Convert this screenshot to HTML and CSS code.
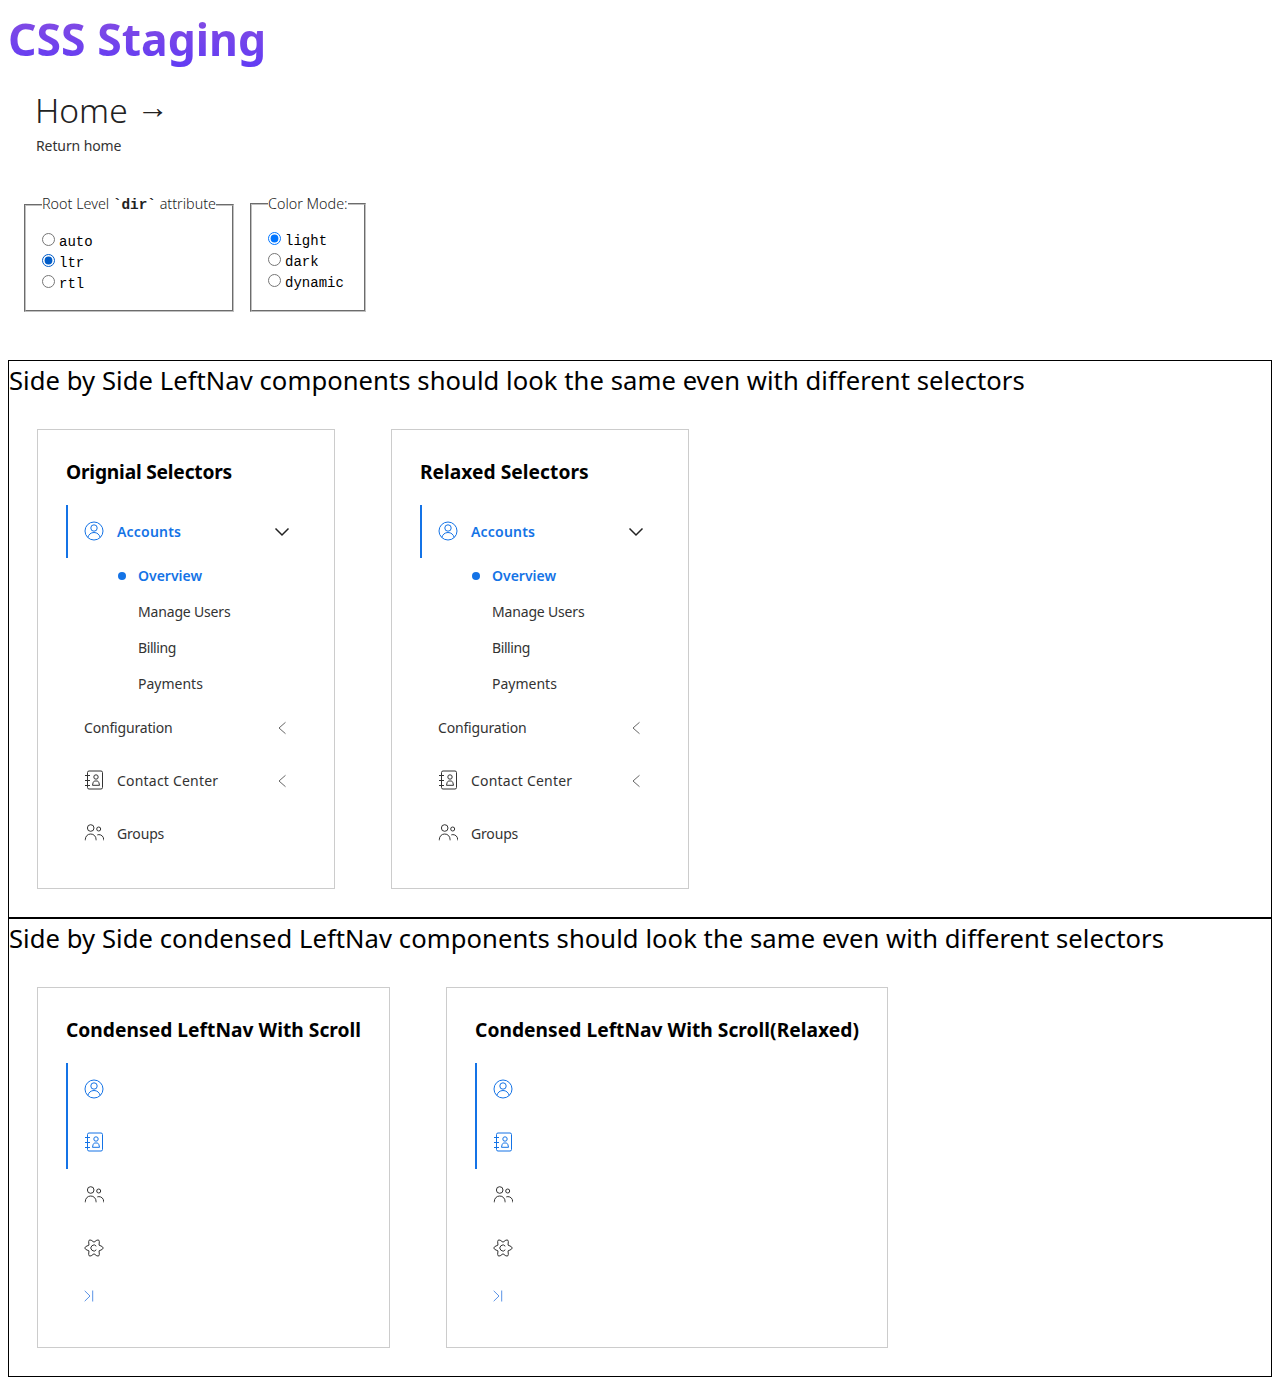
FILE: index.html
```html
<!DOCTYPE html>
<html lang="en">
<head>
  <meta charset="UTF-8">
  <meta name="viewport" content="width=device-width, initial-scale=1.0">
  <title>CSS Staging</title>
  <link rel="stylesheet" href="styles.css">
</head>
<body>
  <!-- Shared nav icons -->
  <svg class="icon-defs" aria-hidden="true">
    <symbol id="i-user" viewBox="0 0 20 20">
      <circle cx="10" cy="10" r="9" />
      <circle cx="10" cy="7" r="3.2" />
      <path d="M3.800 16.500c.8-3 3-5 6.200-5s5.400 2 6.200 5" />
    </symbol>
    <symbol id="i-book" viewBox="0 0 20 20">
      <rect x="3.500" y="1" width="15" height="18" rx="1.500" />
      <path d="M1 5.500h5M1 10.500h5M1 15.500h5" />
      <circle cx="12" cy="7" r="2.200" />
      <path d="M8.500 15.300l.6-2.600c.2-1 1-1.700 2-1.700h1.800c1 0 1.800.7 2 1.700l.6 2.600z" />
    </symbol>
    <symbol id="i-groups" viewBox="0 0 20 20">
      <circle cx="6.700" cy="5" r="3.300" />
      <circle cx="14.700" cy="6" r="2" />
      <path d="M1.300 17.300v-.6c0-3.500 2.400-5.700 5.400-5.700s5.400 2.200 5.400 5.700v.6" />
      <path d="M13.300 11.900c.5-.2 1-.3 1.600-.3 2.600 0 4.800 2 4.800 5v.7" />
    </symbol>
    <symbol id="i-gear" viewBox="0 0 20 20">
      <path d="M15.020 7.100Q23.500 10 15.020 12.900 16.750 21.700 10 15.800 3.250 21.700 4.980 12.900-3.500 10 4.980 7.100 3.250-1.700 10 4.200 16.750-1.700 15.020 7.100z" />
      <path d="M12.300 8.200a3 3 0 1 0 0 3.600" />
    </symbol>
  </svg>

  <h1 class="site-title">CSS Staging</h1>

  <div class="home-link">
    <h2>Home <span>&rarr;</span></h2>
    <p>Return home</p>
  </div>

  <div class="controls">
    <fieldset class="dir-group">
      <legend>Root Level <code>`dir`</code> attribute</legend>
      <label><input type="radio" name="dir">auto</label>
      <label><input class="radio-pressed" type="radio" name="dir" checked>ltr</label>
      <label><input type="radio" name="dir">rtl</label>
    </fieldset>
    <fieldset class="mode-group">
      <legend>Color Mode:</legend>
      <label><input type="radio" name="mode" checked>light</label>
      <label><input type="radio" name="mode">dark</label>
      <label><input type="radio" name="mode">dynamic</label>
    </fieldset>
  </div>

  <section class="compare">
    <h3>Side by Side LeftNav components should look the same even with different selectors</h3>
    <div class="cards">
      <div class="card card-wide">
        <h4 class="tight-title">Orignial Selectors</h4>
        <div class="nav-group">
          <div class="nav-item active">
            <svg class="icon"><use href="#i-user" /></svg>
            <span class="nav-label wide">Accounts</span>
            <svg class="chev-down" viewBox="0 0 16 10"><path d="M1.500 1.500 8 8l6.500-6.500" /></svg>
          </div>
          <ul class="sub-list">
            <li class="current">Overview</li>
            <li class="tight">Manage Users</li>
            <li class="tighter">Billing</li>
            <li>Payments</li>
          </ul>
        </div>
        <div class="nav-item">
          <span class="nav-label tight">Configuration</span>
          <svg class="chev-left" viewBox="0 0 10 16"><path d="M8.500 2.300 2 8l6.500 5.700" /></svg>
        </div>
        <div class="nav-item">
          <svg class="icon"><use href="#i-book" /></svg>
          <span class="nav-label wide">Contact Center</span>
          <svg class="chev-left" viewBox="0 0 10 16"><path d="M8.500 2.300 2 8l6.500 5.700" /></svg>
        </div>
        <div class="nav-item">
          <svg class="icon"><use href="#i-groups" /></svg>
          <span class="nav-label tight">Groups</span>
        </div>
      </div>

      <div class="card card-wide">
        <h4>Relaxed Selectors</h4>
        <div class="nav-group">
          <div class="nav-item active">
            <svg class="icon"><use href="#i-user" /></svg>
            <span class="nav-label wide">Accounts</span>
            <svg class="chev-down" viewBox="0 0 16 10"><path d="M1.500 1.500 8 8l6.500-6.500" /></svg>
          </div>
          <ul class="sub-list">
            <li class="current">Overview</li>
            <li class="tight">Manage Users</li>
            <li class="tighter">Billing</li>
            <li>Payments</li>
          </ul>
        </div>
        <div class="nav-item">
          <span class="nav-label tight">Configuration</span>
          <svg class="chev-left" viewBox="0 0 10 16"><path d="M8.500 2.300 2 8l6.500 5.700" /></svg>
        </div>
        <div class="nav-item">
          <svg class="icon"><use href="#i-book" /></svg>
          <span class="nav-label wide">Contact Center</span>
          <svg class="chev-left" viewBox="0 0 10 16"><path d="M8.500 2.300 2 8l6.500 5.700" /></svg>
        </div>
        <div class="nav-item">
          <svg class="icon"><use href="#i-groups" /></svg>
          <span class="nav-label tight">Groups</span>
        </div>
      </div>
    </div>
  </section>

  <section class="compare">
    <h3>Side by Side condensed LeftNav components should look the same even with different selectors</h3>
    <div class="cards">
      <div class="card">
        <h4>Condensed LeftNav With Scroll</h4>
        <div class="nav-group active">
          <div class="nav-item"><svg class="icon"><use href="#i-user" /></svg></div>
          <div class="nav-item"><svg class="icon"><use href="#i-book" /></svg></div>
        </div>
        <div class="nav-item"><svg class="icon"><use href="#i-groups" /></svg></div>
        <div class="nav-item"><svg class="icon"><use href="#i-gear" /></svg></div>
        <div class="nav-expand">
          <svg viewBox="0 0 10 12"><path d="M.7.8 6 6 .7 11.200M8.700.5v11" /></svg>
        </div>
      </div>

      <div class="card">
        <h4>Condensed LeftNav With Scroll(Relaxed)</h4>
        <div class="nav-group active">
          <div class="nav-item"><svg class="icon"><use href="#i-user" /></svg></div>
          <div class="nav-item"><svg class="icon"><use href="#i-book" /></svg></div>
        </div>
        <div class="nav-item"><svg class="icon"><use href="#i-groups" /></svg></div>
        <div class="nav-item"><svg class="icon"><use href="#i-gear" /></svg></div>
        <div class="nav-expand">
          <svg viewBox="0 0 10 12"><path d="M.7.8 6 6 .7 11.200M8.700.5v11" /></svg>
        </div>
      </div>
    </div>
  </section>
</body>
</html>
```

FILE: styles.css
```css
body {
  margin: 8px;
  font-family: "Noto Sans", sans-serif;
  color: #000;
  background-color: #fff;
}
.icon-defs {
  display: none;
}

/* Page header */
.site-title {
  display: table;
  margin: 0;
  font-size: 44.5px;
  line-height: 62px;
  font-weight: 700;
  background: linear-gradient(180deg, #8a4fe0, #5f3af5);
  -webkit-background-clip: text;
  background-clip: text;
  color: transparent;
}
.home-link {
  padding: 0 28px;
  margin-top: 18px;
  color: #333;
}
.home-link h2 {
  margin: 0 0 0 -1px;
  font-size: 33.6px;
  line-height: 44px;
  font-weight: 300;
  color: #222;
}
.home-link h2 span {
  font-family: "Liberation Sans", sans-serif;
  font-size: 32px;
  line-height: 0;
  vertical-align: 5px;
}
.home-link p {
  margin: 2px 0 0;
  font-size: 14px;
  line-height: 24px;
  letter-spacing: -.1px;
}

/* Radio groups */
.controls {
  display: flex;
  align-items: flex-end;
  gap: 16px;
  margin: 36px 0 0 16px;
}
fieldset {
  margin: 0;
  padding: 0 16px 15px;
  border: 2px groove #c0c0c0;
}
.mode-group {
  width: 80px;
  padding-bottom: 16px;
}
legend {
  height: 19px;
  padding: 0;
  margin-bottom: 18px;
  font-size: 14.35px;
  font-weight: 300;
  line-height: 19px;
  white-space: nowrap;
  color: #222;
}
.dir-group legend {
  height: 21px;
  margin-bottom: 17px;
}
legend code {
  font-family: "Liberation Mono", monospace;
  font-weight: 700;
}
label {
  display: block;
  font-family: "Liberation Mono", monospace;
  font-size: 14px;
  line-height: 21px;
}
label input {
  margin: 0 4px 0 0;
}
.radio-pressed {
  accent-color: #005cc8;
}

/* Comparison sections */
.compare {
  border: 1px solid #000;
}
.controls + .compare {
  margin-top: 48px;
}
.compare h3 {
  margin: 0;
  font-size: 25.6px;
  line-height: 40px;
  font-weight: 400;
  letter-spacing: .06px;
}
.cards {
  display: flex;
  gap: 56px;
  padding: 28px;
}
.card {
  padding: 28px;
  border: 1px solid #ccc;
}
.card-wide {
  width: 240px;
}
.card h4 {
  margin: 0 0 19px;
  font-size: 19.2px;
  line-height: 28px;
  font-weight: 700;
  letter-spacing: .03px;
}
.card .tight-title {
  letter-spacing: -.2px;
}

/* Left nav */
.nav-item {
  display: flex;
  align-items: center;
  height: 53px;
  padding: 0 16px;
  border-left: 2px solid transparent;
  font-size: 14px;
  color: #333;
}
.nav-item.active,
.nav-group.active {
  border-left: 2px solid #1473e6;
}
.nav-item.active {
  color: #1473e6;
  font-weight: 600;
}
.nav-group.active .nav-item {
  border-left: 0;
  color: #1473e6;
}
.icon {
  width: 20px;
  height: 20px;
  margin: -1px 13px 0 0;
  flex-shrink: 0;
  fill: none;
  stroke: currentColor;
  stroke-width: 1;
}
.nav-label {
  flex: 1;
}
.wide {
  letter-spacing: .2px;
}
.tight {
  letter-spacing: -.17px;
}
.tighter {
  letter-spacing: -.4px;
}
.chev-down {
  width: 16px;
  height: 10px;
  fill: none;
  stroke: #222;
  stroke-width: 1.5;
}
.chev-left {
  width: 10px;
  height: 16px;
  margin-right: 3px;
  fill: none;
  stroke: #666;
  stroke-width: 1;
}
.sub-list {
  list-style: none;
  margin: 0 0 -1px;
  padding: 0 0 0 72px;
  font-size: 14px;
  color: #333;
}
.sub-list li {
  position: relative;
  line-height: 36px;
}
.sub-list .current {
  color: #1473e6;
  font-weight: 600;
}
.sub-list .current::before {
  content: "";
  position: absolute;
  left: -20px;
  top: 14px;
  width: 8px;
  height: 8px;
  border-radius: 50%;
  background-color: #1473e6;
}
.nav-expand {
  height: 29px;
  padding: 15px 18px 0;
}
.nav-expand svg {
  display: block;
  width: 10px;
  height: 12px;
  fill: none;
  stroke: #5b93e6;
  stroke-width: 1;
}
```
